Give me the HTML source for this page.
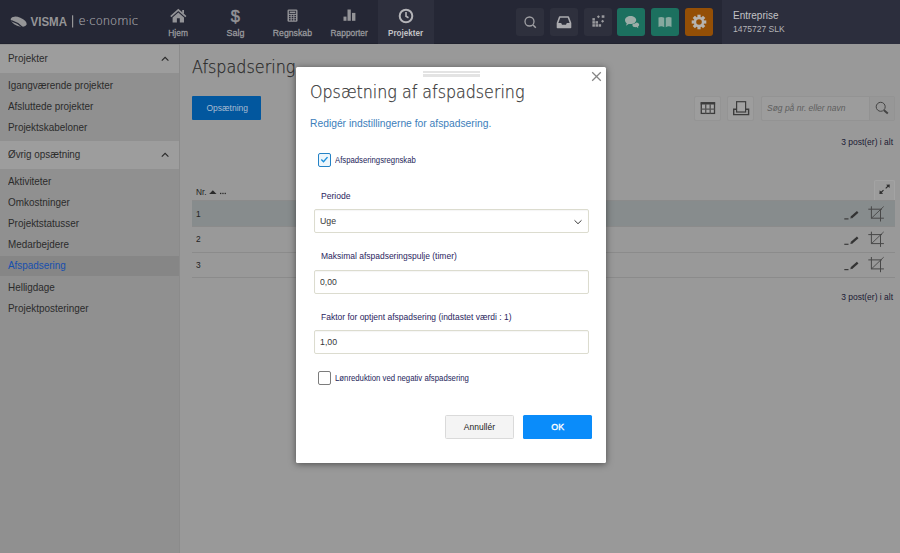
<!DOCTYPE html>
<html lang="da">
<head>
<meta charset="utf-8">
<title>Afspadsering</title>
<style>
*{box-sizing:border-box;margin:0;padding:0}
html,body{width:900px;height:553px;overflow:hidden}
body{position:relative;background:#999999;font-family:"Liberation Sans",Arial,sans-serif;font-size:11px;color:#1c1c1c}
.abs{position:absolute}
.t{display:inline-block;white-space:nowrap;transform-origin:0 50%}
.tc{transform-origin:50% 50%}
.tr{transform-origin:100% 50%}
/* top bar */
#top{position:absolute;left:0;top:0;width:900px;height:44.3px;background:#252735;border-bottom:1px solid #20222e}
#top .nav{position:absolute;top:0;height:44px;width:57px;text-align:center;color:#9a9a9e;font-size:9.5px;-webkit-text-stroke:.3px #9a9a9e}
#top .nav .l{position:absolute;left:-9px;right:-11px;top:26.5px;line-height:12px}
#top .nav.act .l{left:-10px;right:-10px}
#top .nav svg{position:absolute;left:50%;top:7px;margin-left:-9px}
#top .nav.act{background:#2d2f3d;color:#c2c2c6;font-weight:bold;width:56px;-webkit-text-stroke:0}
.tb{position:absolute;top:8px;width:28px;height:27.5px;border-radius:3px;background:#2e303d}
.tb.g{background:#1c705f}
.tb.o{background:#944f06}
#acct{position:absolute;left:722px;top:0;width:178px;height:44px;background:#2c2e3d}
#acct .a1{position:absolute;left:10.5px;top:8.8px;font-size:11px;line-height:13px;color:#c3c3c6}
#acct .a2{position:absolute;left:10.5px;top:23px;font-size:9px;line-height:12px;color:#b4b4b8}
/* sidebar */
#side{position:absolute;left:0;top:44px;width:180px;height:509px;background:#909090;border-right:1px solid #8b8b8b}
.sh{position:absolute;left:0;width:179px;height:28.3px;background:#9d9d9d;font-size:10.4px;line-height:28px;padding-left:7.7px;color:#2b2b2b}
.sh svg{position:absolute;right:9px;top:9px}
.si{position:absolute;left:0;width:179px;height:21px;line-height:21px;padding-left:7.7px;font-size:10.4px;color:#2b2b2b}
.si.sel{height:20.7px;line-height:20.7px;background:#868686;color:#164fae}
/* main */
#title{position:absolute;left:192.3px;top:53.5px;font-family:"DejaVu Sans Light","DejaVu Sans",sans-serif;font-weight:200;font-size:18.5px;line-height:26px;color:#2a2a2a;-webkit-text-stroke:.25px #2a2a2a}
#btnOps{position:absolute;left:192.3px;top:96px;width:69px;height:24px;background:#02579e;color:#a9bdd2;font-size:9.5px;line-height:24px;text-align:center;border-radius:1px}
.ib{position:absolute;top:96px;width:27px;height:25px;background:#9d9d9d;border:1px solid #949494;border-radius:2px}
#srch{position:absolute;left:761px;top:96px;width:134px;height:25px;background:#9c9c9c;border:1px solid #939393;border-radius:2px}
#srch i{position:absolute;left:5.3px;top:-1px;line-height:23px;font-size:9.5px;color:#5e5e5e;font-style:italic}
#srch b{position:absolute;right:0;top:0;width:25px;height:23px;border-left:1px solid #929292;background:#979797}
.cnt{position:absolute;right:7px;font-size:9.5px;line-height:12px;color:#1a1a34}
.row{position:absolute;left:192px;width:703px;border-bottom:1px solid #8b8b8b;font-size:9.5px;padding-left:4px;color:#222}
.row.sel{background:#878c8d}
/* modal */
#modal{position:absolute;left:296px;top:67px;width:310px;height:396px;background:#fff;box-shadow:0 1px 7px rgba(0,0,0,.5);border-radius:1.5px}
#modal h2{position:absolute;left:13.5px;top:12px;font-family:"DejaVu Sans Light","DejaVu Sans",sans-serif;font-weight:200;font-size:17.2px;line-height:26px;color:#3a3a3a;-webkit-text-stroke:.25px #3a3a3a}
#modal .sub{position:absolute;left:14px;top:49.3px;font-size:11.5px;line-height:14px;color:#3d80bb}
.cb{position:absolute;left:21.5px;width:13px;height:13.5px;border:1px solid #7c7c7c;border-radius:2px;background:#fff}
.cb.on{border:1.3px solid #2482c6;background:#edf6fc}
.cbl{position:absolute;left:39px;font-size:9px;line-height:12px;color:#25255a}
.lbl{position:absolute;left:25px;font-size:9.5px;line-height:12px;color:#2a2560}
.inp{position:absolute;left:17.5px;width:275px;height:24.5px;border:1px solid #dcdccf;border-radius:2px;background:#fff;font-size:9.5px;line-height:22px;padding-left:5.5px;color:#383838;box-shadow:inset 0 1px 1px rgba(0,0,0,.04)}
.btn{position:absolute;top:348px;height:24px;font-size:9.5px;line-height:24px;text-align:center;border-radius:1.5px}
</style>
</head>
<body>
<div id="top">
  <svg class="abs" style="left:10px;top:12px" width="135" height="20" viewBox="0 0 135 20">
    <ellipse cx="8.7" cy="9.7" rx="8.4" ry="4.3" transform="rotate(22 8.7 9.7)" fill="#959597"/>
    <path d="M1.2 8.6c3.2 1 8 3.3 11.3 6.7" fill="none" stroke="#252735" stroke-width="1.2"/>
    <text x="20.5" y="14.3" font-family="Liberation Sans, sans-serif" font-weight="bold" font-size="13" fill="#959597" textLength="36.5" lengthAdjust="spacingAndGlyphs">VISMA</text>
    <rect x="62" y="3.3" width="1.2" height="12.2" fill="#959597"/>
    <text x="68.5" y="13.2" font-family="DejaVu Sans Light, DejaVu Sans, sans-serif" font-weight="200" font-size="12.4" fill="#a6a6aa" stroke="#a6a6aa" stroke-width=".2" textLength="59.5" lengthAdjust="spacingAndGlyphs">e·conomic</text>
  </svg>

  <div class="nav" style="left:149px"><svg width="18" height="18" viewBox="0 0 18 18"><path d="M1.8 9.6 9.3 2.8l7.6 6.8" fill="none" stroke="#939397" stroke-width="1.7"/><path d="M9.3 5.5 15 10.6v5H10.8v-4.3H7.9v4.3H3.6v-5z" fill="#939397"/><rect x="13.2" y="3" width="1.8" height="3.6" fill="#939397"/></svg><div class="l"><span class="t tc" id="n1" style="transform:scaleX(0.884)">Hjem</span></div></div>
  <div class="nav" style="left:206px"><svg width="18" height="18" viewBox="0 0 18 18"><text x="9.3" y="14.5" text-anchor="middle" font-family="Liberation Sans, sans-serif" font-size="16.5" stroke="#939397" stroke-width=".5" fill="#939397">$</text></svg><div class="l"><span class="t tc" id="n2" style="transform:scaleX(0.941)">Salg</span></div></div>
  <div class="nav" style="left:263px"><svg width="18" height="18" viewBox="0 0 18 18"><rect x="4.5" y="2.5" width="10" height="12.2" rx="1.3" fill="#939397"/><rect x="6.3" y="4.2" width="6.4" height="2.2" fill="none" stroke="#252735" stroke-width=".8"/><g fill="#252735"><rect x="6" y="7.9" width="1.6" height="1.4"/><rect x="8.7" y="7.9" width="1.6" height="1.4"/><rect x="11.4" y="7.9" width="1.6" height="1.4"/><rect x="6" y="10" width="1.6" height="1.4"/><rect x="8.7" y="10" width="1.6" height="1.4"/><rect x="11.4" y="10" width="1.6" height="1.4"/><rect x="6" y="12.1" width="1.6" height="1.4"/><rect x="8.7" y="12.1" width="1.6" height="1.4"/><rect x="11.4" y="12.1" width="1.6" height="1.4"/></g></svg><div class="l"><span class="t tc" id="n3" style="transform:scaleX(0.916)">Regnskab</span></div></div>
  <div class="nav" style="left:320px"><svg width="18" height="18" viewBox="0 0 18 18"><g fill="#939397"><rect x="3.5" y="9.6" width="3" height="4.2"/><rect x="7.5" y="2.5" width="3.3" height="11.3"/><rect x="12" y="5.9" width="3.4" height="7.9"/></g></svg><div class="l"><span class="t tc" id="n4" style="transform:scaleX(0.878)">Rapporter</span></div></div>
  <div class="nav act" style="left:378px"><svg width="18" height="18" viewBox="0 0 18 18"><circle cx="9" cy="9" r="6.3" fill="none" stroke="#b4b4b8" stroke-width="2"/><path d="M9 5v4.3l2.5 1.5" fill="none" stroke="#b4b4b8" stroke-width="1.6"/></svg><div class="l"><span class="t tc" id="n5" style="transform:scaleX(0.855)">Projekter</span></div></div>

  <div class="tb" style="left:516px"><svg width="28" height="28" viewBox="0 0 28 28"><circle cx="13.5" cy="13.5" r="4.5" fill="none" stroke="#a0a0a4" stroke-width="1.3"/><path d="M17 17l2.8 2.8" stroke="#a0a0a4" stroke-width="1.5"/></svg></div>
  <div class="tb" style="left:550px"><svg width="28" height="28" viewBox="0 0 28 28"><path d="M7.5 15l2.2-6h8.6l2.2 6v4.5h-13z" fill="none" stroke="#ababaf" stroke-width="1.6" stroke-linejoin="round"/><path d="M7.5 15h3.7l.8 1.8h4l.8-1.8h3.7v4.5h-13z" fill="#ababaf"/></svg></div>
  <div class="tb" style="left:583.5px"><svg width="28" height="28" viewBox="0 0 28 28"><g fill="#9a9a9e"><rect x="8.4" y="10.1" width="2.5" height="2.5"/><rect x="8.4" y="13.15" width="2.5" height="2.5"/><rect x="8.4" y="16.2" width="2.5" height="2.5"/><rect x="11.5" y="13.15" width="2.5" height="2.5"/><rect x="11.5" y="16.2" width="2.5" height="2.5"/><rect x="14.6" y="16.2" width="2.5" height="2.5"/><rect x="17.7" y="7.3" width="2.7" height="2.5"/><rect x="13.3" y="7.7" width="2.2" height="2.2" transform="rotate(45 14.4 8.8)"/><rect x="17.5" y="12.1" width="2.2" height="2.2" transform="rotate(45 18.6 13.2)"/></g></svg></div>
  <div class="tb g" style="left:617px"><svg width="28" height="28" viewBox="0 0 28 28"><path d="M8 12c0-2.300 2.500-4.100 5.600-4.100s5.600 1.800 5.600 4.100-2.500 4.100-5.600 4.100c-.7 0-1.300-.1-1.900-.2L8.900 17.800l.9-2.400C8.700 14.600 8 13.400 8 12z" fill="#9dada8"/><path d="M19.400 14.400c1.600.2 2.800 1.200 2.800 2.400 0 .8-.5 1.500-1.300 1.900l.5 1.500-2-1.100c-.3 0-.5.100-.8.100-1.800 0-3.200-1-3.200-2.300 0-.4.100-.7.300-1 1.600-.2 2.900-.7 3.700-1.500z" fill="#9dada8"/></svg></div>
  <div class="tb g" style="left:651px"><svg width="28" height="28" viewBox="0 0 28 28"><path d="M7.5 9.5c2-.8 4-.7 5.8.3v9.4c-1.8-1-3.8-1.1-5.8-.3z" fill="#86a99f"/><path d="M20.5 9.5c-2-.8-4-.7-5.8.3v9.4c1.8-1 3.8-1.1 5.8-.3z" fill="#86a99f"/></svg></div>
  <div class="tb o" style="left:685px"><svg width="28" height="28" viewBox="0 0 28 28"><g transform="translate(14 14)" fill="#b6b4b1"><circle r="5.2"/><rect x="-1.6" y="-7.3" width="3.2" height="14.6"/><rect x="-1.6" y="-7.3" width="3.2" height="14.6" transform="rotate(45)"/><rect x="-1.6" y="-7.3" width="3.2" height="14.6" transform="rotate(90)"/><rect x="-1.6" y="-7.3" width="3.2" height="14.6" transform="rotate(135)"/><circle r="2.8" fill="#944f06"/></g></svg></div>

  <div id="acct"><div class="a1"><span class="t" id="a1" style="transform:scaleX(0.907)">Entreprise</span></div><div class="a2"><span class="t" id="a2" style="transform:scaleX(0.948)">1475727 SLK</span></div></div>
</div>

<div id="side">
  <div class="sh" style="top:.5px"><span class="t" id="h1" style="transform:scaleX(0.955)">Projekter</span><svg width="10" height="10" viewBox="0 0 10 10"><path d="M1.8 6.6 5.1 3.3l3.3 3.3" fill="none" stroke="#2a2a2a" stroke-width="1.15"/></svg></div>
  <div class="si" style="top:31.2px"><span class="t" id="s1" style="transform:scaleX(0.953)">Igangværende projekter</span></div>
  <div class="si" style="top:52.2px"><span class="t" id="s2" style="transform:scaleX(0.953)">Afsluttede projekter</span></div>
  <div class="si" style="top:73.4px"><span class="t" id="s3" style="transform:scaleX(0.952)">Projektskabeloner</span></div>
  <div class="sh" style="top:96.5px"><span class="t" id="h2" style="transform:scaleX(0.948)">Øvrig opsætning</span><svg width="10" height="10" viewBox="0 0 10 10"><path d="M1.8 6.6 5.1 3.3l3.3 3.3" fill="none" stroke="#2a2a2a" stroke-width="1.15"/></svg></div>
  <div class="si" style="top:127.2px"><span class="t" id="s4" style="transform:scaleX(0.951)">Aktiviteter</span></div>
  <div class="si" style="top:148.2px"><span class="t" id="s5" style="transform:scaleX(0.955)">Omkostninger</span></div>
  <div class="si" style="top:169.2px"><span class="t" id="s6" style="transform:scaleX(0.954)">Projektstatusser</span></div>
  <div class="si" style="top:190.3px"><span class="t" id="s7" style="transform:scaleX(0.951)">Medarbejdere</span></div>
  <div class="si sel" style="top:211.5px"><span class="t" id="s8" style="transform:scaleX(0.953)">Afspadsering</span></div>
  <div class="si" style="top:233px"><span class="t" id="s9" style="transform:scaleX(0.955)">Helligdage</span></div>
  <div class="si" style="top:254px"><span class="t" id="s10" style="transform:scaleX(0.955)">Projektposteringer</span></div>
</div>

<div id="title"><span class="t" id="ti" style="transform:scaleX(0.865)">Afspadsering</span></div>
<div id="btnOps"><span class="t tc" id="bo" style="transform:scaleX(0.891)">Opsætning</span></div>

<div class="ib" style="left:694px"><svg class="abs" style="left:0;top:0" width="25" height="23" viewBox="0 0 25 23"><rect x="6.3" y="5.9" width="13.2" height="10.5" fill="#a6a6a6" stroke="#3c3c3c" stroke-width="1.3"/><rect x="5.7" y="5.2" width="14.4" height="2.3" fill="#3c3c3c"/><path d="M6.3 12.1h13.2M10.7 7v9.4M15.2 7v9.4" stroke="#555" stroke-width="1.4"/></svg></div>
<div class="ib" style="left:727px"><svg class="abs" style="left:0;top:0" width="25" height="23" viewBox="0 0 25 23"><rect x="8.6" y="4.7" width="9" height="10.3" fill="#a2a2a2" stroke="#3c3c3c" stroke-width="1.2"/><path d="M8.6 12.3H5.7v5.3h14.9v-5.3h-3" fill="none" stroke="#3c3c3c" stroke-width="1.4"/></svg></div>
<div id="srch"><i><span class="t" id="ph" style="transform:scaleX(0.892)">Søg på nr. eller navn</span></i><b><svg class="abs" style="left:0;top:0" width="24" height="23" viewBox="0 0 24 23"><circle cx="10.7" cy="9.8" r="4.5" fill="none" stroke="#444" stroke-width="1"/><path d="M14 13.2l3.8 3.2" stroke="#444" stroke-width="2"/></svg></b></div>
<div class="cnt" style="top:136px"><span class="t tr" id="c1" style="transform:scaleX(0.894)">3 post(er) i alt</span></div>
<div class="cnt" style="top:290.5px"><span class="t tr" id="c2" style="transform:scaleX(0.894)">3 post(er) i alt</span></div>

<div class="abs" style="left:195.5px;top:185.5px;font-size:9.5px;line-height:12px;color:#222"><span class="t" id="nr" style="transform:scaleX(0.873)">Nr.</span></div>
<svg class="abs" style="left:208px;top:186px" width="20" height="10" viewBox="0 0 20 10"><path d="M1.2 8h7.3L4.85 4.3z" fill="#2a2a2a"/><rect x="12" y="6.8" width="1.3" height="1.3" fill="#2a2a2a"/><rect x="14.3" y="6.8" width="1.3" height="1.3" fill="#2a2a2a"/><rect x="16.6" y="6.8" width="1.3" height="1.3" fill="#2a2a2a"/></svg>
<div class="abs" style="left:874px;top:180px;width:21px;height:21px;background:#9c9c9c;border:1px solid #a3a3a3;border-bottom:0;border-radius:2px 2px 0 0"><svg class="abs" style="left:0;top:0" width="20" height="19" viewBox="0 0 20 19"><path d="M14.8 3.4l-3.7.3 3.4 3.4zM4.4 13l.3-3.7 3.4 3.4z" fill="#2e2e2e"/><path d="M13.2 5l-2.5 2.3M8.5 9.2 6 11.5" stroke="#2e2e2e" stroke-width="1.1"/></svg></div>
<div class="abs" style="left:192px;top:200px;width:703px;height:1px;background:#8b8b8b"></div>
<div class="row sel" style="top:201px;height:26px;line-height:25px"><span class="t" style="transform:scaleX(.88)">1</span></div>
<div class="row" style="top:227px;height:26px;line-height:24px"><span class="t" style="transform:scaleX(.88)">2</span></div>
<div class="row" style="top:253px;height:25px;line-height:23px"><span class="t" style="transform:scaleX(.88)">3</span></div>

<svg class="abs" style="left:842px;top:201px" width="50" height="78" viewBox="0 0 50 78">
  <g id="ri"><path d="M2.3 17.9h4.2" stroke="#3a3a3a" stroke-width="1.2"/><path d="M9.4 16.4 15.7 10.9" stroke="#333" stroke-width="2.3"/><path d="M8.3 17.5l.6-2 1.5 1.5z" fill="#333"/><path d="M26.3 8.2h13.7M29.4 5.3v12.2M29.4 17.2h12.5M38.5 8.2v12.3" fill="none" stroke="#484848" stroke-width="1"/><path d="M29.7 17 41.7 5.5" stroke="#484848" stroke-width=".9"/></g>
  <use href="#ri" y="25.4"/><use href="#ri" y="50.7"/>
</svg>

<div id="modal">
  <div class="abs" style="left:127px;top:3.5px;width:57px;height:2.5px;background:#e3e3e3"></div>
  <div class="abs" style="left:127px;top:7px;width:57px;height:2.5px;background:#e3e3e3"></div>
  <svg class="abs" style="left:295px;top:3.7px" width="11" height="11" viewBox="0 0 11 11"><path d="M1.2 1.2l8.6 8.6M9.8 1.2l-8.6 8.6" stroke="#858585" stroke-width="1.25"/></svg>
  <h2><span class="t" id="mh" style="transform:scaleX(0.925)">Opsætning af afspadsering</span></h2>
  <div class="sub"><span class="t" id="ms" style="transform:scaleX(0.895)">Redigér indstillingerne for afspadsering.</span></div>
  <div class="cb on" style="top:86px"><svg class="abs" style="left:0;top:0" width="11" height="11" viewBox="0 0 11 11"><path d="M2.3 5.5l2.2 2.2 4-4.6" fill="none" stroke="#1a8fdc" stroke-width="1.4"/></svg></div>
  <div class="cbl" style="top:86.5px"><span class="t" id="k1" style="transform:scaleX(0.859)">Afspadseringsregnskab</span></div>
  <div class="lbl" style="top:123px"><span class="t" id="l1" style="transform:scaleX(0.904)">Periode</span></div>
  <div class="inp" style="top:141.5px"><span class="t" id="v1" style="transform:scaleX(0.923)">Uge</span><svg class="abs" style="right:5px;top:8.5px" width="10" height="8" viewBox="0 0 10 8"><path d="M1.5 2.3l3.5 3.4 3.5-3.4" fill="none" stroke="#3a3a3a" stroke-width="1"/></svg></div>
  <div class="lbl" style="top:183px"><span class="t" id="l2" style="transform:scaleX(0.893)">Maksimal afspadseringspulje (timer)</span></div>
  <div class="inp" style="top:202.5px"><span class="t" id="v2" style="transform:scaleX(0.908)">0,00</span></div>
  <div class="lbl" style="top:243.5px"><span class="t" id="l3" style="transform:scaleX(0.893)">Faktor for optjent afspadsering (indtastet værdi : 1)</span></div>
  <div class="inp" style="top:262.7px"><span class="t" id="v3" style="transform:scaleX(0.924)">1,00</span></div>
  <div class="cb" style="top:304px"></div>
  <div class="cbl" style="top:304.5px"><span class="t" id="k2" style="transform:scaleX(0.863)">Lønreduktion ved negativ afspadsering</span></div>
  <div class="btn" style="left:149px;width:69px;background:#f4f4f4;border:1px solid #dadada;color:#222;line-height:22px"><span class="t tc" id="b1" style="transform:scaleX(0.895)">Annullér</span></div>
  <div class="btn" style="left:227px;width:69px;background:#0a8cfa;color:#fff;-webkit-text-stroke:.35px #fff;font-size:9.3px"><span class="t tc" id="b2" style="transform:scaleX(0.953)">OK</span></div>
</div>
</body>
</html>
